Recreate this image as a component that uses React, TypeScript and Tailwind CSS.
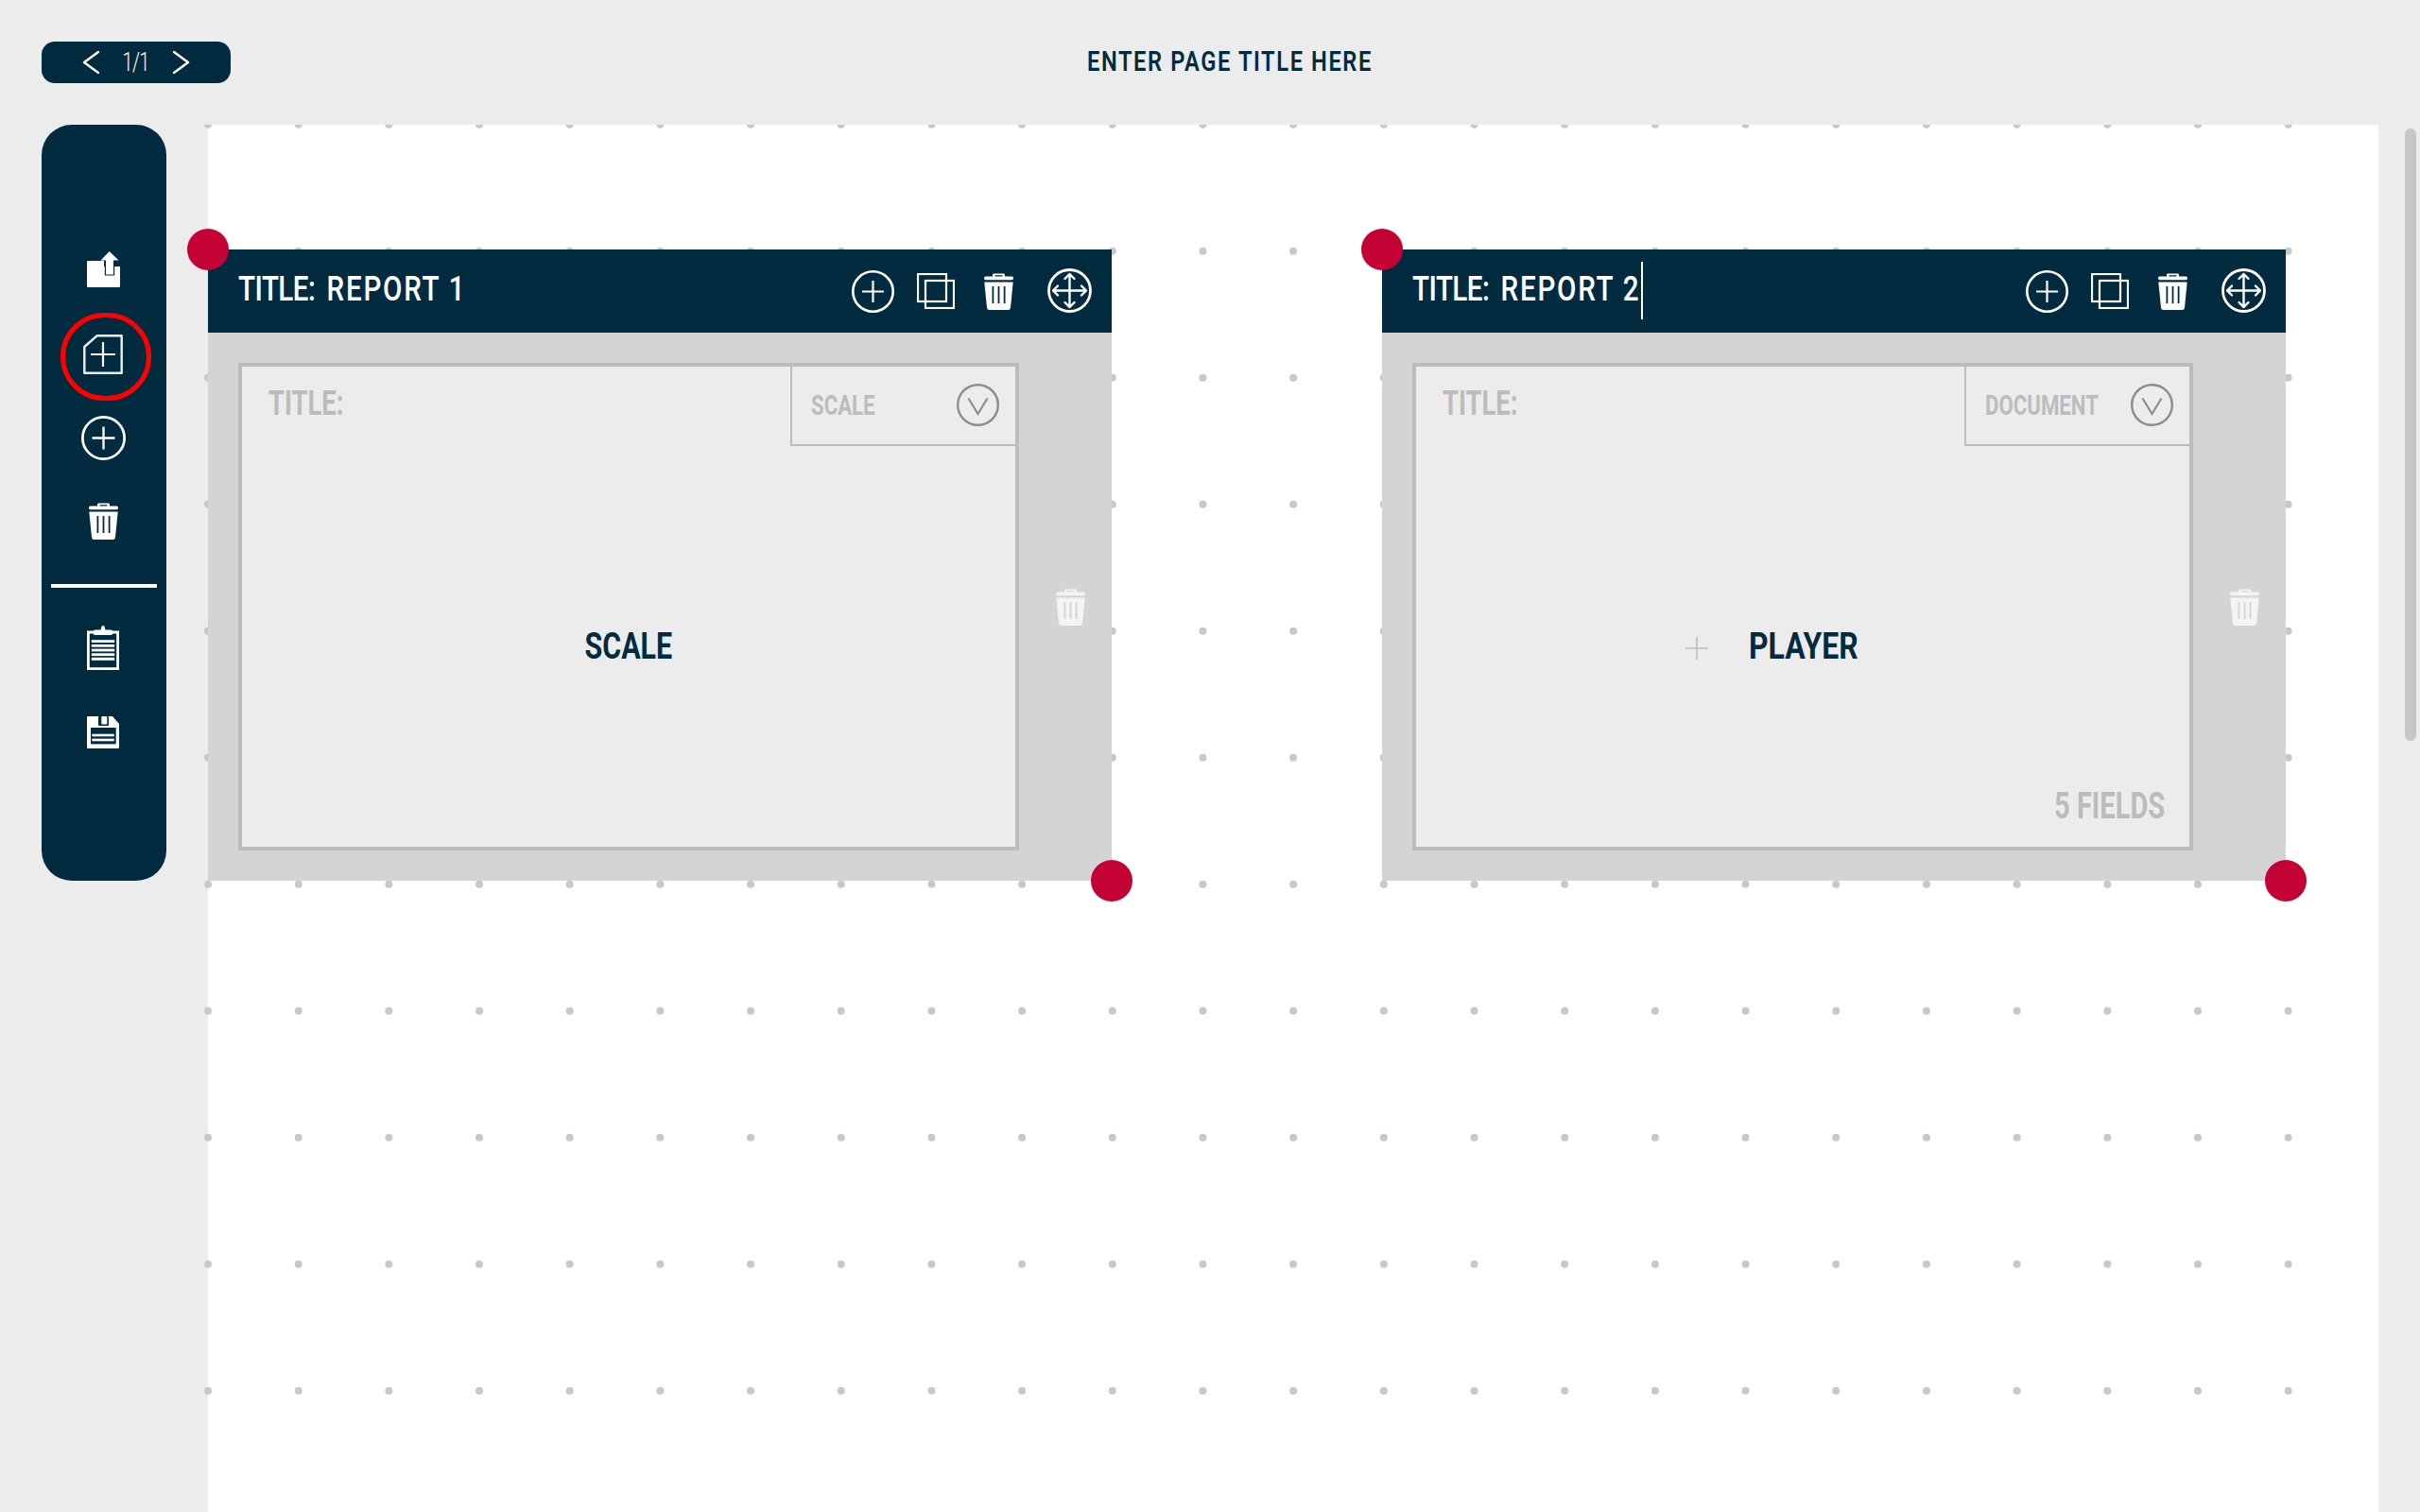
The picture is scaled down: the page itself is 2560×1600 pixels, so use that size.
import React from "react";

const DOT_XS = Array.from({ length: 24 }, (_, i) => 8 + i * 95.68);
const DOT_YS = Array.from({ length: 11 }, (_, i) => -0.3 + i * 134);

function Trash({ className = "text-white" }: { className?: string }) {
  return (
    <svg viewBox="0 0 31 39" className={`w-[31px] h-[39px] ${className}`}>
      <path
        fill="currentColor"
        fillRule="evenodd"
        d="M10 0.5Q9 0.5 9 2V3.5H1.5Q0 3.5 0 5.2Q0 7.2 1.5 7.2H29.5Q31 7.2 31 5.2Q31 3.5 29.5 3.5H22V2Q22 0.5 21 0.5ZM11.5 2.2H19.5V3.5H11.5ZM0.3 9.5L3 36.5Q3.3 39 5.5 39H25.5Q27.7 39 28 36.5L30.7 9.5ZM8.5 14H10.3V32H8.5ZM14.6 14H16.4V32H14.6ZM20.7 14H22.5V32H20.7Z"
      />
    </svg>
  );
}

function PlusCircle({ size = 45 }: { size?: number }) {
  return (
    <svg viewBox="0 0 45 45" width={size} height={size} className="text-white shrink-0">
      <circle cx="22.5" cy="22.5" r="21.2" fill="none" stroke="currentColor" strokeWidth="2.6" />
      <path d="M22.5 11V34M11 22.5H34" fill="none" stroke="currentColor" strokeWidth="2.2" />
    </svg>
  );
}

function Copy() {
  return (
    <svg viewBox="0 0 40 38" className="w-[40px] h-[38px] text-white">
      <rect x="1" y="1" width="30" height="29" fill="none" stroke="currentColor" strokeWidth="2.2" />
      <rect x="9" y="8" width="30" height="29" fill="none" stroke="currentColor" strokeWidth="2.2" />
    </svg>
  );
}

function Move() {
  return (
    <svg viewBox="0 0 47 47" className="w-[47px] h-[47px] text-white -translate-y-px">
      <circle cx="23.5" cy="23.5" r="22" fill="none" stroke="currentColor" strokeWidth="2.8" />
      <path
        d="M23.5 6V41M6 23.5H41M18.5 11L23.5 6L28.5 11M18.5 36L23.5 41L28.5 36M11 18.5L6 23.5L11 28.5M36 18.5L41 23.5L36 28.5"
        fill="none"
        stroke="currentColor"
        strokeWidth="2.4"
        strokeLinecap="round"
        strokeLinejoin="round"
      />
    </svg>
  );
}

function Export() {
  return (
    <svg viewBox="0 0 35 38" className="w-[35px] h-[38px]">
      <rect x="0" y="10" width="35" height="28" rx="1.2" fill="#fff" />
      <rect x="18" y="5" width="17" height="11" fill="#032b40" />
      <rect x="18.8" y="9" width="10.4" height="16.5" fill="#032b40" />
      <path d="M23.7 0L33.5 9.5H28V24.5H20V9.5H14.5Z" fill="#fff" />
    </svg>
  );
}

function NewPage() {
  return (
    <svg viewBox="0 0 42 42" className="w-[42px] h-[42px] text-[#eef1f2]">
      <path d="M14.5 1.3H40.7V40.7H1.3V13Z" fill="none" stroke="currentColor" strokeWidth="2.4" strokeLinejoin="round" />
      <path d="M21 8V34M8 21H34" fill="none" stroke="#fff" strokeWidth="2.2" />
    </svg>
  );
}

function Clipboard() {
  return (
    <svg viewBox="0 0 34 47" className="w-[34px] h-[47px]">
      <path d="M7 7H1.4V45.6H32.6V7H27" fill="none" stroke="#fff" strokeWidth="2.8" />
      <path d="M17 0Q19 0 19.3 4.5H25Q27.5 4.5 27.5 7.2T25 10H9Q6.5 10 6.5 7.2T9 4.5H14.7Q15 0 17 0Z" fill="#fff" />
      <rect x="4.8" y="15.2" width="24.4" height="2.8" fill="#fff" />
      <rect x="4.8" y="19.9" width="24.4" height="2.8" fill="#fff" />
      <rect x="4.8" y="24.6" width="24.4" height="2.8" fill="#fff" />
      <rect x="4.8" y="29.3" width="24.4" height="2.8" fill="#fff" />
      <rect x="4.8" y="33.8" width="24.4" height="3" fill="#fff" />
    </svg>
  );
}

function Save() {
  return (
    <svg viewBox="0 0 34 34" className="w-[34px] h-[34px]">
      <path d="M1 0H27L34 8V33Q34 34 33 34H1Q0 34 0 33V1Q0 0 1 0Z" fill="#fff" />
      <rect x="12" y="0" width="11" height="10" rx="1" fill="#032b40" />
      <rect x="15.3" y="0" width="6" height="8.5" rx="1" fill="#fff" />
      <rect x="4" y="12" width="26.7" height="17.4" fill="#032b40" />
      <rect x="5.3" y="18.7" width="23.4" height="2.6" fill="#fff" />
      <rect x="5.3" y="23.7" width="23.4" height="2.6" fill="#fff" />
    </svg>
  );
}

function ChevronCircle() {
  return (
    <svg viewBox="0 0 45 45" className="w-[45px] h-[45px] shrink-0 -translate-y-px">
      <circle cx="22.5" cy="22.5" r="21.3" fill="none" stroke="#8c8c8c" strokeWidth="2.4" />
      <path d="M12.5 15.5L22.5 32L32.5 15.5" fill="none" stroke="#8c8c8c" strokeWidth="2.2" />
    </svg>
  );
}

function Card({ name, tag, cursor, children }: { name: string; tag: string; cursor?: boolean; children?: React.ReactNode }) {
  return (
    <div className="relative flex flex-col w-[956px] h-[668px] shrink-0 bg-[#d4d4d4]">
      <div className="flex items-center h-[88px] bg-[#032b40] pl-[32px] pr-[21.5px] shrink-0">
        <div className="relative flex-1 h-full flex items-center">
          <span className="-translate-y-[3px] font-['Roboto',sans-serif] font-medium text-[37px] leading-none text-white tracking-[2.2px] whitespace-pre origin-left scale-x-[0.8]">
            <span className="tracking-[-0.7px]">TITLE:</span>
            <span className="ml-[4px]"> {name}</span>
          </span>
          {cursor && <span className="absolute left-[242px] top-[13px] w-[2px] h-[61px] bg-white" />}
        </div>
        <PlusCircle />
        <div className="ml-[23.5px]"><Copy /></div>
        <div className="ml-[31px]"><Trash /></div>
        <div className="ml-[36px]"><Move /></div>
      </div>
      <div className="flex flex-1 pt-[32px] pl-[32px]">
        <div className="relative flex flex-col w-[826px] h-[516px] border-4 border-[#bcbcbc] bg-[#ececec]">
          <div className="flex justify-between h-[84px] shrink-0">
            <div className="pl-[28px] pt-[20px]">
              <span className="block font-['Roboto',sans-serif] font-bold text-[37px] leading-none text-[#bcbcbc] origin-left scale-x-[0.74]">
                TITLE:
              </span>
            </div>
            <div className="flex items-center w-[238px] border-l-2 border-b-2 border-[#bcbcbc] pl-[20px] pr-[17px]">
              <div className="flex-1 w-0">
                <span className="block whitespace-nowrap font-['Roboto',sans-serif] font-bold text-[30px] leading-none text-[#bcbcbc] origin-left scale-x-[0.74]">
                  {tag}
                </span>
              </div>
              <ChevronCircle />
            </div>
          </div>
          <div className="relative flex flex-1 items-center justify-center">{children}</div>
        </div>
        <div className="pl-[39px] pt-[239px]">
          <Trash className="text-[#f4f4f4]" />
        </div>
      </div>
      <span className="absolute -left-[22px] -top-[22px] w-[44px] h-[44px] rounded-full bg-[#c40233]" />
      <span className="absolute -right-[22px] -bottom-[22px] w-[44px] h-[44px] rounded-full bg-[#c40233]" />
    </div>
  );
}

export default function App() {
  return (
    <div className="flex flex-col w-[2560px] h-[1600px] overflow-hidden bg-[#ececec]">
      <header className="flex items-start h-[132px] shrink-0 pl-[44px] pt-[44px]">
        <div className="flex items-center justify-center gap-[26.5px] w-[200px] h-[44px] rounded-[14px] bg-[#032b40]">
          <svg viewBox="0 0 18 24" className="w-[18px] h-[24px]">
            <path d="M17 1L2 12L17 23" fill="none" stroke="#fff" strokeWidth="2.4" strokeLinecap="round" strokeLinejoin="round" />
          </svg>
          <div className="flex justify-center w-[25px]">
            <span className="shrink-0 font-['Roboto',sans-serif] font-light text-[28px] leading-none text-white tracking-[-1px] whitespace-nowrap scale-x-[0.72]">1/1</span>
          </div>
          <svg viewBox="0 0 18 24" className="w-[18px] h-[24px]">
            <path d="M1 1L16 12L1 23" fill="none" stroke="#fff" strokeWidth="2.4" strokeLinecap="round" strokeLinejoin="round" />
          </svg>
        </div>
        <h1 className="ml-[905.5px] mt-[6px] font-['Roboto',sans-serif] font-semibold text-[30px] leading-none text-[#032b40] tracking-[2px] whitespace-nowrap origin-left scale-x-[0.79]">
          ENTER PAGE TITLE HERE
        </h1>
      </header>
      <main className="flex flex-1">
        <aside className="flex flex-col items-center w-[132px] h-[800px] ml-[44px] pr-[2px] pt-[134px] rounded-[32px] bg-[#032b40] shrink-0">
          <Export />
          <div className="relative mt-[50px]">
            <NewPage />
            <span className="absolute -left-[24px] -top-[23px] w-[96px] h-[93px] rounded-full border-[5px] border-[#ff0000]" />
          </div>
          <div className="mt-[43.5px]"><PlusCircle size={47} /></div>
          <div className="mt-[45.5px]"><Trash /></div>
          <div className="mt-[47px] ml-[2px] w-[112px] h-[4px] bg-white shrink-0" />
          <div className="mt-[40px]"><Clipboard /></div>
          <div className="mt-[49px]"><Save /></div>
        </aside>
        <section className="relative flex items-start gap-[286px] w-[2296px] ml-[44px] pt-[132px] bg-white shrink-0">
          <svg className="absolute -left-[8px] top-0 w-[2220px] h-[1468px] overflow-hidden" viewBox="0 0 2220 1468">
            {DOT_YS.map((y) => DOT_XS.map((x) => <circle key={`${x}-${y}`} cx={x} cy={y} r="4" fill="#c8c8c8" />))}
          </svg>
          <Card name="REPORT 1" tag="SCALE">
            <span className="font-['Roboto',sans-serif] font-bold text-[38px] leading-none text-[#032b40] scale-x-[0.8]">SCALE</span>
          </Card>
          <Card name="REPORT 2" tag="DOCUMENT" cursor>
            <svg viewBox="0 0 24 24" className="absolute left-[285px] top-[202px] w-[24px] h-[24px]">
              <path d="M12 0V24M0 12H24" fill="none" stroke="#bcbcbc" strokeWidth="1.6" />
            </svg>
            <span className="font-['Roboto',sans-serif] font-bold text-[38px] leading-none text-[#032b40] scale-x-[0.84] translate-x-px">PLAYER</span>
            <span className="absolute right-[26px] bottom-[24px] font-['Roboto',sans-serif] font-bold text-[38px] leading-none text-[#bcbcbc] origin-right scale-x-[0.765]">
              5 FIELDS
            </span>
          </Card>
        </section>
        <div className="w-[12px] h-[648px] ml-[28px] mt-[4px] rounded-full bg-[#c5c7c5] shrink-0" />
      </main>
    </div>
  );
}
